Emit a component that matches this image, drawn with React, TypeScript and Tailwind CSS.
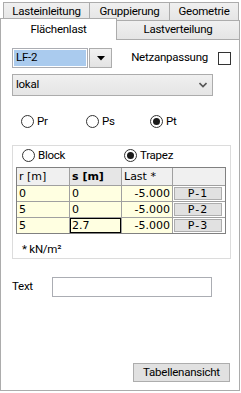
import React from "react";

function Radio({ checked }: { checked?: boolean }) {
  return (
    <span className="w-[13px] h-[13px] rounded-full border border-[#333333] bg-white flex items-center justify-center shrink-0">
      {checked && <span className="w-[7px] h-[7px] rounded-full bg-[#1a1a1a]" />}
    </span>
  );
}

const rows = [
  { r: "0", s: "0", last: "-5.000", p: "P-1" },
  { r: "5", s: "0", last: "-5.000", p: "P-2" },
  { r: "5", s: "2.7", last: "-5.000", p: "P-3", sel: true },
];

export default function App() {
  return (
    <div className="w-[241px] h-[393px] bg-white overflow-hidden text-[11.5px] tracking-[-0.25px] leading-none text-black font-['Roboto',sans-serif]">
      {/* tab row 1 */}
      <div className="flex pl-[3px] pt-[2px] h-[20px]">
        <div className="w-[86px] h-[18px] border-l border-t border-[#acacac] bg-gradient-to-b from-[#f0f0f0] to-[#e5e5e5] flex items-center justify-center">Lasteinleitung</div>
        <div className="w-[80px] h-[18px] border-l border-t border-[#acacac] bg-gradient-to-b from-[#f0f0f0] to-[#e5e5e5] flex items-center justify-center">Gruppierung</div>
        <div className="w-[70px] h-[18px] border-l border-t border-r border-[#acacac] bg-gradient-to-b from-[#f0f0f0] to-[#e5e5e5] flex items-center justify-center">Geometrie</div>
      </div>
      {/* tab row 2 */}
      <div className="flex items-start h-[19px]">
        <div className="relative z-10 w-[117px] h-[22px] -mt-[2px] border-l border-t border-r border-[#acacac] bg-white flex items-start justify-center pt-[5px]">Flächenlast</div>
        <div className="w-[123px] h-[19px] border-t border-r border-[#acacac] bg-gradient-to-b from-[#f0f0f0] to-[#e5e5e5] flex items-center justify-center">Lastverteilung</div>
      </div>
      {/* panel */}
      <div className="w-[240px] h-[352px] border border-[#acacac] bg-white flex flex-col pl-[11px] pt-[8px]">
        {/* LF row */}
        <div className="flex items-start h-[20px] pr-[8px]">
          <div className="w-[76px] h-[20px] border border-[#abadb3] bg-white p-[1px]">
            <div className="w-full h-full bg-[#aacbee] flex items-center pl-[2px]">LF-2</div>
          </div>
          <div className="ml-[1px] w-[23px] h-[20px] border border-[#acacac] bg-gradient-to-b from-[#f2f2f2] to-[#e3e3e3] flex items-center justify-center">
            <svg width="8" height="5" viewBox="0 0 8 5"><path d="M0 0 H8 L4 4.5 Z" fill="#000" /></svg>
          </div>
          <div className="ml-auto flex items-center gap-[10px] h-[20px]">
            <span>Netzanpassung</span>
            <span className="w-[13px] h-[13px] border border-[#333333] bg-white" />
          </div>
        </div>
        {/* lokal combo */}
        <div className="mt-[6px] w-[201px] h-[22px] border border-[#acacac] bg-gradient-to-b from-[#f0f0f0] to-[#e5e5e5] flex items-center pl-[3px] pr-[5px]">
          <span>lokal</span>
          <svg className="ml-auto" width="8" height="6" viewBox="0 0 8 6"><path d="M0.5 1 L4 4.5 L7.5 1" stroke="#555" strokeWidth="1.6" fill="none" /></svg>
        </div>
        {/* radio row */}
        <div className="mt-[19px] flex items-center h-[13px] pl-[9px]">
          <div className="w-[65px] flex items-center gap-[3px]"><Radio /><span>Pr</span></div>
          <div className="w-[64px] flex items-center gap-[3px]"><Radio /><span>Ps</span></div>
          <div className="flex items-center gap-[3px]"><Radio checked /><span>Pt</span></div>
        </div>
        {/* group box */}
        <div className="mt-[17px] w-[219px] h-[114px] border border-[#dcdcdc] flex flex-col pl-[3px]">
          <div className="mt-[3px] flex items-center h-[13px] pl-[6px]">
            <div className="w-[102px] flex items-center gap-[3px]"><Radio /><span>Block</span></div>
            <div className="flex items-center gap-[3px]"><Radio checked /><span>Trapez</span></div>
          </div>
          {/* table */}
          <div className="mt-[5px] w-[210px] border border-[#808080] bg-[#a0a0a0] grid grid-cols-[52px_51px_50px_52px] gap-px text-[11px] tracking-normal font-['DejaVu_Sans',sans-serif]">
            <div className="h-[17px] bg-[#f0f0f0] flex items-center pl-[2px]">r [m]</div>
            <div className="h-[17px] bg-[#e6e6e6] flex items-center pl-[2px] font-bold">s [m]</div>
            <div className="h-[17px] bg-[#f0f0f0] flex items-center pl-[2px]">Last *</div>
            <div className="h-[17px] bg-[#f0f0f0]" />
            {rows.map((row) => (
              <React.Fragment key={row.p}>
                <div className="h-[15px] bg-[#ffffe1] flex items-center pl-[2px]">{row.r}</div>
                <div className={`h-[15px] bg-[#ffffe1] flex items-center pl-[2px] ${row.sel ? "shadow-[inset_0_0_0_1px_#000]" : ""}`}>{row.s}</div>
                <div className="h-[15px] bg-[#ffffe1] flex items-center justify-end pr-[2px]">{row.last}</div>
                <div className="h-[15px] bg-white pl-[1px] pr-[3px] py-[1px]">
                  <div className="w-full h-full border border-[#adadad] bg-[#e1e1e1] flex items-center justify-center tracking-[1px]">{row.p}</div>
                </div>
              </React.Fragment>
            ))}
          </div>
          <div className="mt-[10px] pl-[6px] flex items-center">* kN/m²</div>
        </div>
        {/* text row */}
        <div className="mt-[18px] flex items-center h-[20px]">
          <span className="w-[40px]">Text</span>
          <div className="w-[160px] h-[20px] border border-[#abadb3] bg-white" />
        </div>
        {/* button */}
        <div className="mt-auto mb-[8px] ml-[121px] w-[97px] h-[19px] border border-[#adadad] bg-[#e1e1e1] flex items-center justify-center">Tabellenansicht</div>
      </div>
    </div>
  );
}
